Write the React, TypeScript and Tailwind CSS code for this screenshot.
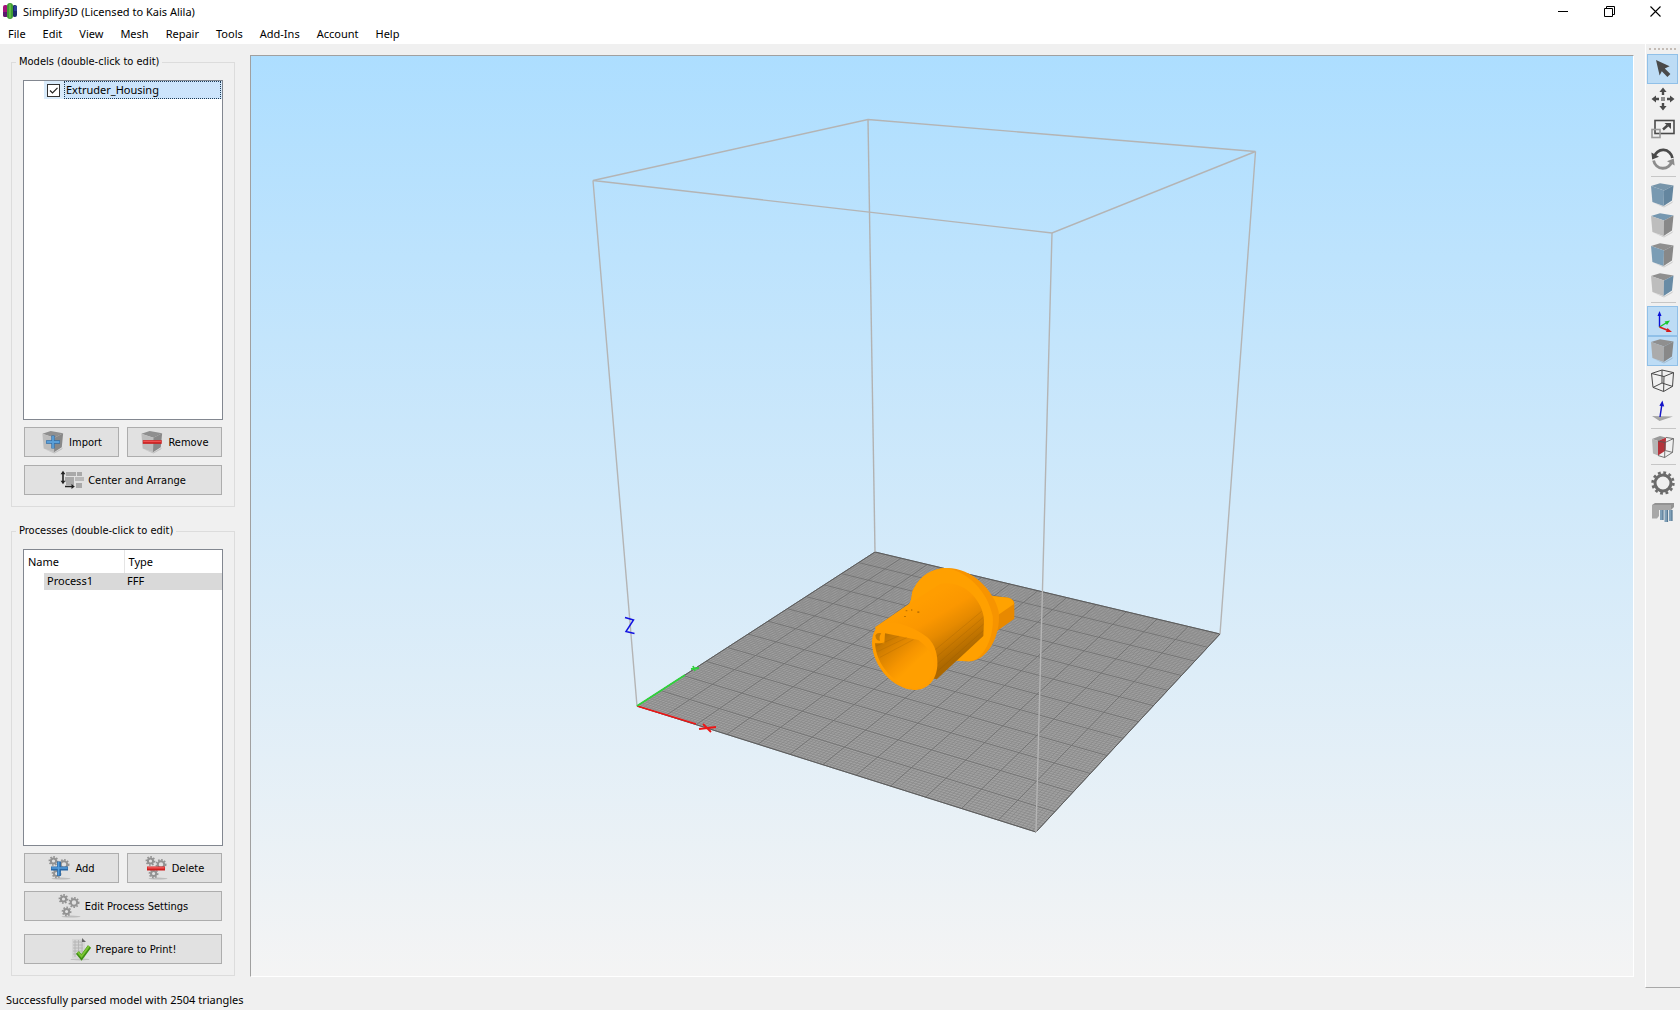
import React, { useState } from 'react';

const MENUS = ['File', 'Edit', 'View', 'Mesh', 'Repair', 'Tools', 'Add-Ins', 'Account', 'Help'];

/* ---------- icons ---------- */

interface CubeProps {
    top?: string;
    left?: string;
    right?: string;
}

const CubeFaces: React.FC<CubeProps> = ({ top = '#8f8f8f', left = '#bdbdbd', right = '#888888' }) => (
    <>
        <path d="M3 20.5 14 24.5 23.5 19 22 21 14 25.5Z" fill="#000" opacity="0.15" />
        <path d="M1 4 10 1.2 23.5 3.6 14 8.5Z" fill={top} />
        <path d="M1 4 14 8.5 13.6 24 2.4 20Z" fill={left} />
        <path d="M14 8.5 23.5 3.6 22 18.6 13.6 24Z" fill={right} />
    </>
);

const Cube: React.FC<CubeProps> = (props) => (
    <svg width="25" height="26" viewBox="0 0 25 26">
        <CubeFaces {...props} />
    </svg>
);

const ImportIcon = () => (
    <svg width="24" height="24" viewBox="0 0 25 26">
        <CubeFaces />
        <path d="M12.5 6V20M5 13H20" stroke="#2f6da8" strokeWidth="3.6" />
        <path d="M12.5 6.6V19.4M5.6 13H19.4" stroke="#5a9fd8" strokeWidth="2" />
    </svg>
);

const RemoveIcon = () => (
    <svg width="24" height="24" viewBox="0 0 25 26">
        <CubeFaces />
        <path d="M2.5 13H23" stroke="#c91f1f" strokeWidth="4" />
        <path d="M3 12.4H22.5" stroke="#ee5050" strokeWidth="1.6" />
    </svg>
);

const ArrangeIcon = () => (
    <svg width="24" height="20" viewBox="0 0 24 20">
        <g fill="#a9a9a9">
            <rect x="6" y="2" width="10" height="4" />
            <rect x="17" y="2" width="5" height="4" />
            <rect x="5" y="7" width="9" height="5" />
            <rect x="15" y="7" width="9" height="4" fill="#b9b9b9" />
            <rect x="6" y="12" width="8" height="3" />
            <rect x="16" y="13" width="6" height="5" />
        </g>
        <path d="M3 3V12M5 16.5H13" stroke="#222" strokeWidth="1.6" />
        <path d="M.6 4.2 3 .8 5.4 4.2ZM.6 10.8 3 14.2 5.4 10.8ZM11.5 14 14.8 16.5 11.5 19Z" fill="#222" />
    </svg>
);

const MiniGear: React.FC<{ cx: number; cy: number; r: number }> = ({ cx, cy, r }) => (
    <g fill="none" stroke="#929292">
        <circle cx={cx} cy={cy} r={r} strokeWidth="2" />
        <circle cx={cx} cy={cy} r={r + 1.5} strokeWidth="1.6" strokeDasharray="1.6 1.5" />
    </g>
);

const GearsIcon: React.FC<{ sign?: 'plus' | 'minus' }> = ({ sign }) => (
    <svg width="23" height="24" viewBox="0 0 23 24">
        <ellipse cx="13" cy="22.6" rx="9.5" ry="1" fill="#bcbcbc" />
        <MiniGear cx={5.5} cy={5} r={2.6} />
        <MiniGear cx={16} cy={8.5} r={3.2} />
        <MiniGear cx={8.6} cy={17.5} r={2.6} />
        {sign === 'plus' && (
            <>
                <path d="M11 5.5V20M3 12.5H20" stroke="#2766a5" strokeWidth="3.8" />
                <path d="M10.6 6V19.5M3.5 12H19.5" stroke="#559ddb" strokeWidth="1.6" />
            </>
        )}
        {sign === 'minus' && (
            <>
                <path d="M2 12.5H20" stroke="#cc1f1f" strokeWidth="4" />
                <path d="M2.5 11.8H19.5" stroke="#ef5252" strokeWidth="1.6" />
            </>
        )}
    </svg>
);

const PrepareIcon = () => (
    <svg width="22" height="24" viewBox="0 0 22 24">
        <ellipse cx="10" cy="22.4" rx="9.5" ry="1" fill="#c2c2c2" />
        <path d="M2 2H12L15 5V21H2Z" fill="#d6d6d6" />
        <path d="M3 5H12M3 8H13M3 11H13M3 14H13M3 17H12M5 3V20M8.5 3V20M12 3V20" stroke="#b4b4b4" strokeWidth="0.9" />
        <path d="M12 1V5H16Z" fill="#666" />
        <path d="M7.5 15.5 11.5 20.5 19.5 9.5" fill="none" stroke="#3f8f13" strokeWidth="4" />
        <path d="M7.8 15 11.5 19.4 19 9.2" fill="none" stroke="#7cc534" strokeWidth="2" />
    </svg>
);

const AppLogo = () => (
    <svg width="16" height="16" viewBox="0 0 16 16">
        <rect x="1" y="2" width="5" height="12" rx="2" fill="#a3127c" />
        <path d="M1 9H6V12Q6 14 4 14H3Q1 14 1 12Z" fill="#5b1a6e" />
        <rect x="10.5" y="2" width="4.5" height="12" rx="2" fill="#1c2a6c" />
        <path d="M12 3H15V8H12Z" fill="#2d3f96" />
        <rect x="5" y="0" width="6" height="16" rx="3" fill="#3f9c35" />
        <rect x="7" y="1" width="2" height="14" rx="1" fill="#63b944" />
    </svg>
);

const CursorIcon = () => (
    <svg width="24" height="24" viewBox="0 0 24 24">
        <path d="M5 3 18.6 9.2 13.8 11.4 19.4 17 16.4 20 10.8 14.2 8.6 18.6Z" fill="#4a4a4a" />
    </svg>
);

const MoveIcon = () => (
    <svg width="24" height="24" viewBox="0 0 24 24" fill="#4a4a4a">
        <rect x="10" y="10" width="4" height="4" fill="#8f8f8f" />
        <path d="M12 .5 15.6 5H13.2V8H10.8V5H8.4ZM12 23.5 8.4 19H10.8V16H13.2V19H15.6ZM.5 12 5 8.4V10.8H8V13.2H5V15.6ZM23.5 12 19 15.6V13.2H16V10.8H19V8.4Z" />
    </svg>
);

const ScaleIcon = () => (
    <svg width="24" height="20" viewBox="0 0 24 20" fill="none">
        <rect x="4" y="1.5" width="19" height="13" stroke="#4a4a4a" strokeWidth="1.6" />
        <rect x="1" y="10.5" width="8" height="8" stroke="#9a9a9a" strokeWidth="1.6" />
        <path d="M12 10.5 16.5 6.5" stroke="#4a4a4a" strokeWidth="2.4" />
        <path d="M13.5 4H20V10Z" fill="#4a4a4a" />
    </svg>
);

const RotateIcon = () => (
    <svg width="24" height="26" viewBox="0 0 24 26" fill="none">
        <path d="M3 11A9.4 9.4 0 0 1 21.4 12" stroke="#4a4a4a" strokeWidth="2.8" />
        <path d="M21 15A9.4 9.4 0 0 1 2.6 14.5" stroke="#8c8c8c" strokeWidth="2.8" />
        <path d="M.4 6.4 8 10.8 1.2 13.6Z" fill="#4a4a4a" />
        <path d="M23.6 19.6 16 15.2 22.8 12.4Z" fill="#8c8c8c" />
    </svg>
);

const AxesIcon = () => (
    <svg width="24" height="26" viewBox="0 0 24 26" fill="none">
        <path d="M8.5 19V6" stroke="#0b12d8" strokeWidth="1.4" />
        <path d="M8.5 3 10.5 8H6.5Z" fill="#0b12d8" />
        <path d="M8.5 19 15 15" stroke="#19c52a" strokeWidth="1.4" />
        <path d="M19 12.6 16 17 13.6 13.4Z" fill="#19c52a" />
        <path d="M8.5 19 16 22" stroke="#d61b1b" strokeWidth="1.6" />
        <path d="M21 24 15 24 16.4 20Z" fill="#d61b1b" />
    </svg>
);

const WireIcon = () => (
    <svg width="24" height="24" viewBox="0 0 24 24" fill="none" stroke="#484848" strokeWidth="1">
        <path d="M.5 4.5 13 7.5 12.6 22.5 2 18.4ZM.5 4.5 11 1 22.5 3.6 13 7.5M22.5 3.6 21.5 17.4 12.6 22.5M11 1V14L2 18.4M11 14 21.5 17.4" />
    </svg>
);

const NormalIcon = () => (
    <svg width="24" height="24" viewBox="0 0 24 24">
        <path d="M1 17 22 17.4 8.6 22Z" fill="#a5a5a5" />
        <path d="M9 18 10.8 6" stroke="#1414c8" strokeWidth="1.5" />
        <path d="M11.4 1.5 13.2 7.4 8.4 6.8Z" fill="#1414c8" />
    </svg>
);

const SectionIcon = () => (
    <svg width="24" height="24" viewBox="0 0 24 24">
        <path d="M1 4 9 1 15 2.4 7 6Z" fill="#9a9a9a" />
        <path d="M1 4 7 6V20.5L2 18.4Z" fill="#b5b5b5" />
        <path d="M7 6 15 2.4 14.6 15.6 7 20.5Z" fill="#b4323a" />
        <path d="M15 2.4 22.5 3.6 14 7.5 7 6M14 7.5 13.6 22.5 7 20.5M22.5 3.6 21.5 17.4 13.6 22.5M14.6 15.6 21.5 17.4" fill="none" stroke="#555" strokeWidth="0.8" />
    </svg>
);

const GearIcon = () => (
    <svg width="24" height="24" viewBox="0 0 24 24" fill="none" stroke="#6b6b6b">
        <circle cx="12" cy="12" r="8" strokeWidth="3" />
        <circle cx="12" cy="12" r="10.4" strokeWidth="2.6" strokeDasharray="2.8 2.645" />
    </svg>
);

const SupportIcon = () => (
    <svg width="24" height="22" viewBox="0 0 24 22">
        <path d="M1 3 4 1H23V5L20 8H1Z" fill="#939393" />
        <path d="M1 3H20V8H1Z" fill="#a8a8a8" />
        <path d="M1 8H8V14L6 16.4H1Z" fill="#a8a8a8" />
        <path d="M9 8H12V18H9ZM13.5 8H16.5V20H13.5ZM18 8H21V19H18Z" fill="#7fa0b8" />
        <path d="M11.4 8H12.6V18H11.4ZM15.9 8H17.1V20H15.9ZM20.4 8H21.6V19H20.4Z" fill="#587a93" />
    </svg>
);

/* ---------- 3D view ---------- */

// projected corners of the build plate: origin, end of X, far corner, end of Y
const PLATE = [
    [637, 706],
    [1036, 832],
    [1220, 634],
    [875, 552],
];

const projectToPlate = (u: number, v: number) => {
    const [[x0, y0], [x1, y1], [x2, y2], [x3, y3]] = PLATE;
    const dx1 = x1 - x2, dx2 = x3 - x2, dx3 = x0 - x1 + x2 - x3;
    const dy1 = y1 - y2, dy2 = y3 - y2, dy3 = y0 - y1 + y2 - y3;
    const det = dx1 * dy2 - dx2 * dy1;
    const g = (dx3 * dy2 - dx2 * dy3) / det;
    const h = (dx1 * dy3 - dx3 * dy1) / det;
    const w = g * u + h * v + 1;
    return [
        ((x1 - x0 + g * x1) * u + (x3 - x0 + h * x3) * v + x0) / w,
        ((y1 - y0 + g * y1) * u + (y3 - y0 + h * y3) * v + y0) / w,
    ];
};

const gridPath = (cells: number) => {
    let d = '';
    for (let i = 0; i <= cells; i++) {
        const t = i / cells;
        const lines = [
            [projectToPlate(t, 0), projectToPlate(t, 1)],
            [projectToPlate(0, t), projectToPlate(1, t)],
        ];
        lines.forEach(([a, b]) => {
            d += `M${a[0].toFixed(1)} ${a[1].toFixed(1)}L${b[0].toFixed(1)} ${b[1].toFixed(1)}`;
        });
    }
    return d;
};

const MINOR_GRID = gridPath(120);
const MAJOR_GRID = gridPath(12);

const HousingModel = () => (
    <g transform="translate(840 540) scale(0.33333)">
        <defs>
            <linearGradient id="barrel" gradientUnits="userSpaceOnUse" x1="270" y1="170" x2="372" y2="342">
                <stop offset="0" stopColor="#ff9d00" />
                <stop offset="0.3" stopColor="#fb9700" />
                <stop offset="0.55" stopColor="#e68a00" />
                <stop offset="0.8" stopColor="#c47600" />
                <stop offset="1" stopColor="#ac6800" />
            </linearGradient>
            <linearGradient id="bore" gradientUnits="userSpaceOnUse" x1="120" y1="290" x2="210" y2="385">
                <stop offset="0" stopColor="#b87000" />
                <stop offset="0.35" stopColor="#d98200" />
                <stop offset="0.75" stopColor="#f69500" />
                <stop offset="1" stopColor="#ff9f00" />
            </linearGradient>
        </defs>
        {/* tab behind the flange */}
        <path d="M450 167 505 173Q522 178 523 190V236L470 274Z" fill="#e88900" />
        <path d="M450 167 505 173Q522 178 522 192L474 225Z" fill="#ffa200" />
        {/* flange */}
        <path d="M206 196C220 170 212 160 222 145C240 108 276 84 322 84C395 84 462 150 476 215C484 290 440 364 385 364L348 362Z" fill="#f79400" />
        <path d="M206 196C220 170 212 160 222 145C240 108 276 84 322 84C380 96 442 150 458 228C464 290 430 364 385 364L348 362Z" fill="#ffa000" />
        {/* barrel */}
        <path d="M105 262 212 188 300 132C370 118 428 180 432 240L430 288 290 418 200 400 120 300Z" fill="url(#barrel)" />
        <path d="M285 330 425 214M288 352 430 232M290 374 431 252M290 396 430 272" stroke="#8f5500" strokeWidth="3" opacity="0.22" />
        {/* mouth ring and bore */}
        <path d="M96 310C96 285 104 262 125 252C160 236 230 265 262 292C285 312 294 345 292 378C288 425 260 450 222 450C160 448 98 380 96 310Z" fill="#ff9d00" />
        <path d="M105 310 133 310 135 280 235 300C262 320 278 340 282 372C278 420 250 444 220 444C165 436 108 375 105 310Z" fill="url(#bore)" />
        <path d="M108 318 176 288M112 335 200 293M120 352 220 299" stroke="#8f5500" strokeWidth="3" opacity="0.2" />
        <path d="M106 286Q112 276 124 280 116 290 120 302 108 304 106 286Z" fill="#c97b00" />
        <path d="M197 210h5v4h-5zM213 208h4v4h-4zM232 214h6v5h-6zM192 228h6v3h-6z" fill="#c27400" />
    </g>
);

const BuildView = () => (
    <svg className="h-full w-full" viewBox="251 56 1382 920" preserveAspectRatio="xMidYMid meet" role="img" aria-label="Build volume">
        <polygon points={PLATE.map((p) => p.join(',')).join(' ')} fill="#a2a2a2" />
        <path d={MINOR_GRID} stroke="#666" strokeWidth="0.7" opacity="0.45" />
        <path d={MAJOR_GRID} stroke="#5a5a5a" strokeWidth="0.8" opacity="0.6" />
        <polygon points={PLATE.map((p) => p.join(',')).join(' ')} fill="none" stroke="#5c5c5c" />
        <path d="M868 119.5 875 552" stroke="#b2b2b2" strokeWidth="1.4" />
        <HousingModel />
        <g fill="none" stroke="#b4b4b4" strokeWidth="1.4">
            <path d="M593 180.5 868 119.5 1255.5 151.5 1052 233Z" />
            <path d="M593 180.5 637 706M1052 233 1036 832M1255.5 151.5 1220 634" />
        </g>
        <path d="M637 706 696 724M699 729 716 727M703 724 711 732" stroke="#ee1515" strokeWidth="1.8" />
        <path d="M637 706 685 675M691 669 699 668M693 666 695 671" stroke="#2fd23c" strokeWidth="1.8" />
        <path d="M625 617.5 633.5 620 626 631.5 634.5 633.5" fill="none" stroke="#1212e0" strokeWidth="1.5" />
    </svg>
);

/* ---------- window parts ---------- */

const PushButton: React.FC<{ icon: React.ReactNode; children: React.ReactNode }> = ({ icon, children }) => (
    <button
        type="button"
        className="flex h-[30px] flex-1 items-center justify-center gap-1 border border-[#adadad] bg-[#e1e1e1] font-['DejaVu_Sans_Condensed','DejaVu_Sans',sans-serif] hover:border-[#0078d7] hover:bg-[#e5f1fb]"
    >
        {icon}
        <span className="pt-[2px] whitespace-nowrap">{children}</span>
    </button>
);

const GroupBox: React.FC<{ title: string; children: React.ReactNode }> = ({ title, children }) => (
    <fieldset className="flex min-h-0 min-w-0 flex-1 flex-col border border-[#dcdcdc] px-[11px] pt-[10px] pb-[11px]">
        <legend className="-ml-[7px] px-[3px] font-['DejaVu_Sans_Condensed','DejaVu_Sans',sans-serif] leading-4">{title}</legend>
        {children}
    </fieldset>
);

const TOOLS: ({ label: string; icon: React.ReactNode; active?: boolean } | null)[] = [
    { label: 'Normal selection', icon: <CursorIcon />, active: true },
    { label: 'Translate models', icon: <MoveIcon /> },
    { label: 'Scale models', icon: <ScaleIcon /> },
    { label: 'Rotate models', icon: <RotateIcon /> },
    null,
    { label: 'Default view', icon: <Cube top="#7795aa" left="#7899b1" right="#64869f" /> },
    { label: 'Top view', icon: <Cube top="#7597b0" /> },
    { label: 'Front view', icon: <Cube left="#7b9db5" /> },
    { label: 'Side view', icon: <Cube right="#688ba5" /> },
    null,
    { label: 'Show coordinate axes', icon: <AxesIcon />, active: true },
    { label: 'Solid model', icon: <Cube left="#ababab" />, active: true },
    { label: 'Wireframe', icon: <WireIcon /> },
    { label: 'Show normals', icon: <NormalIcon /> },
    null,
    { label: 'Cross section', icon: <SectionIcon /> },
    null,
    { label: 'Machine control panel', icon: <GearIcon /> },
    { label: 'Customize supports', icon: <SupportIcon /> },
];

export default function App() {
    const [modelVisible, setModelVisible] = useState(true);

    return (
        <div className="flex h-screen flex-col bg-[#f0f0f0] font-['Noto_Sans',sans-serif] text-[11px] leading-4 text-black">
            <header className="bg-white">
                <div className="flex h-[22px] items-center pl-[2px]">
                    <AppLogo />
                    <h1 className="ml-[5px] flex-1 pt-px">Simplify3D (Licensed to Kais Alila)</h1>
                    <div className="flex pr-[2px]">
                        <button type="button" aria-label="Minimize" className="flex h-[22px] w-[46px] items-center justify-center">
                            <svg width="11" height="11" viewBox="0 0 11 11"><path d="M0 5.5H10" stroke="#000" /></svg>
                        </button>
                        <button type="button" aria-label="Restore" className="flex h-[22px] w-[46px] items-center justify-center">
                            <svg width="11" height="11" viewBox="0 0 11 11" fill="none" stroke="#000">
                                <path d="M.5 2.5H8.5V10.5H.5ZM2.5 2.5V.5H10.5V8.5H8.5" />
                            </svg>
                        </button>
                        <button type="button" aria-label="Close" className="flex h-[22px] w-[46px] items-center justify-center">
                            <svg width="11" height="11" viewBox="0 0 11 11"><path d="M.5 .5 10.5 10.5M10.5 .5 .5 10.5" stroke="#000" strokeWidth="1.1" /></svg>
                        </button>
                    </div>
                </div>
                <nav className="flex h-[22px] items-center gap-px pt-px">
                    {MENUS.map((menu) => (
                        <button key={menu} type="button" className="px-2 hover:bg-[#e5f3ff]">{menu}</button>
                    ))}
                </nav>
            </header>

            <div className="flex min-h-0 flex-1">
                <aside className="flex w-[250px] shrink-0 flex-col gap-4 pt-[10px] pr-[15px] pb-3 pl-[11px]">
                    <GroupBox title="Models (double-click to edit)">
                        <div className="min-h-0 flex-1 border border-[#828790] bg-white">
                            <label className="ml-5 flex h-[18px] items-center bg-[#d9ebfb] pr-px pl-[3px]">
                                <span className="grid">
                                    <input
                                        type="checkbox"
                                        checked={modelVisible}
                                        onChange={(e) => setModelVisible(e.target.checked)}
                                        className="peer col-start-1 row-start-1 h-[13px] w-[13px] appearance-none border border-[#333] bg-white"
                                    />
                                    <svg className="pointer-events-none invisible col-start-1 row-start-1 peer-checked:visible" width="13" height="13" viewBox="0 0 13 13">
                                        <path d="M3 6.5 5.5 9 10.5 3.8" fill="none" stroke="#222" strokeWidth="1.2" />
                                    </svg>
                                </span>
                                <span className="ml-1 h-[18px] flex-1 border border-dotted border-[#1c3a55] bg-[#cce4fb] pl-px">Extruder_Housing</span>
                            </label>
                        </div>
                        <div className="mt-[7px] flex flex-col gap-2 px-px">
                            <div className="flex gap-2">
                                <PushButton icon={<ImportIcon />}>Import</PushButton>
                                <PushButton icon={<RemoveIcon />}>Remove</PushButton>
                            </div>
                            <div className="flex">
                                <PushButton icon={<ArrangeIcon />}>Center and Arrange</PushButton>
                            </div>
                        </div>
                    </GroupBox>

                    <GroupBox title="Processes (double-click to edit)">
                        <div className="min-h-0 flex-1 border border-[#828790] bg-white">
                            <table className="w-full table-fixed border-collapse text-left">
                                <thead>
                                    <tr className="h-[23px]">
                                        <th className="w-[100px] border-r border-[#e5e5e5] pl-1 font-normal">Name</th>
                                        <th className="pl-1 font-normal">Type</th>
                                    </tr>
                                </thead>
                                <tbody>
                                    <tr>
                                        <td className="p-0 pl-5"><div className="h-[17px] bg-[#d9d9d9] pl-[3px]">Process1</div></td>
                                        <td className="p-0"><div className="h-[17px] bg-[#d9d9d9] pl-[3px]">FFF</div></td>
                                    </tr>
                                </tbody>
                            </table>
                        </div>
                        <div className="mt-[7px] flex flex-col gap-2 px-px">
                            <div className="flex gap-2">
                                <PushButton icon={<GearsIcon sign="plus" />}>Add</PushButton>
                                <PushButton icon={<GearsIcon sign="minus" />}>Delete</PushButton>
                            </div>
                            <div className="flex">
                                <PushButton icon={<GearsIcon />}>Edit Process Settings</PushButton>
                            </div>
                            <div className="mt-[5px] flex">
                                <PushButton icon={<PrepareIcon />}>Prepare to Print!</PushButton>
                            </div>
                        </div>
                    </GroupBox>
                </aside>

                <main className="mt-[11px] mb-[11px] min-w-0 flex-1 border border-t-[#a0a0a0] border-r-white border-b-white border-l-[#a0a0a0] bg-linear-to-b from-[#addeff] to-[#f4f4f4]">
                    <BuildView />
                </main>

                <div role="toolbar" className="ml-[11px] flex w-[35px] shrink-0 flex-col border-b border-l border-b-[#a8a8a8] border-l-white pt-1 pl-px">
                    <div className="mb-1 ml-[2px] w-[27px] border-t-2 border-dotted border-[#c4bcb6]" />
                    {TOOLS.map((tool, i) =>
                        tool ? (
                            <button
                                key={tool.label}
                                type="button"
                                aria-label={tool.label}
                                className={`flex h-[30px] w-[31px] items-center justify-center border ${
                                    tool.active ? 'border-[#90c0e8] bg-[#bddcf5]' : 'border-transparent hover:bg-[#d8eaf9]'
                                }`}
                            >
                                {tool.icon}
                            </button>
                        ) : (
                            <div key={i} className="mx-1 my-[2px] h-[2px] border-t border-[#c6c6c6]" />
                        )
                    )}
                </div>
            </div>

            <footer className="flex h-[22px] items-center pt-px pl-[6px]">Successfully parsed model with 2504 triangles</footer>
        </div>
    );
}
